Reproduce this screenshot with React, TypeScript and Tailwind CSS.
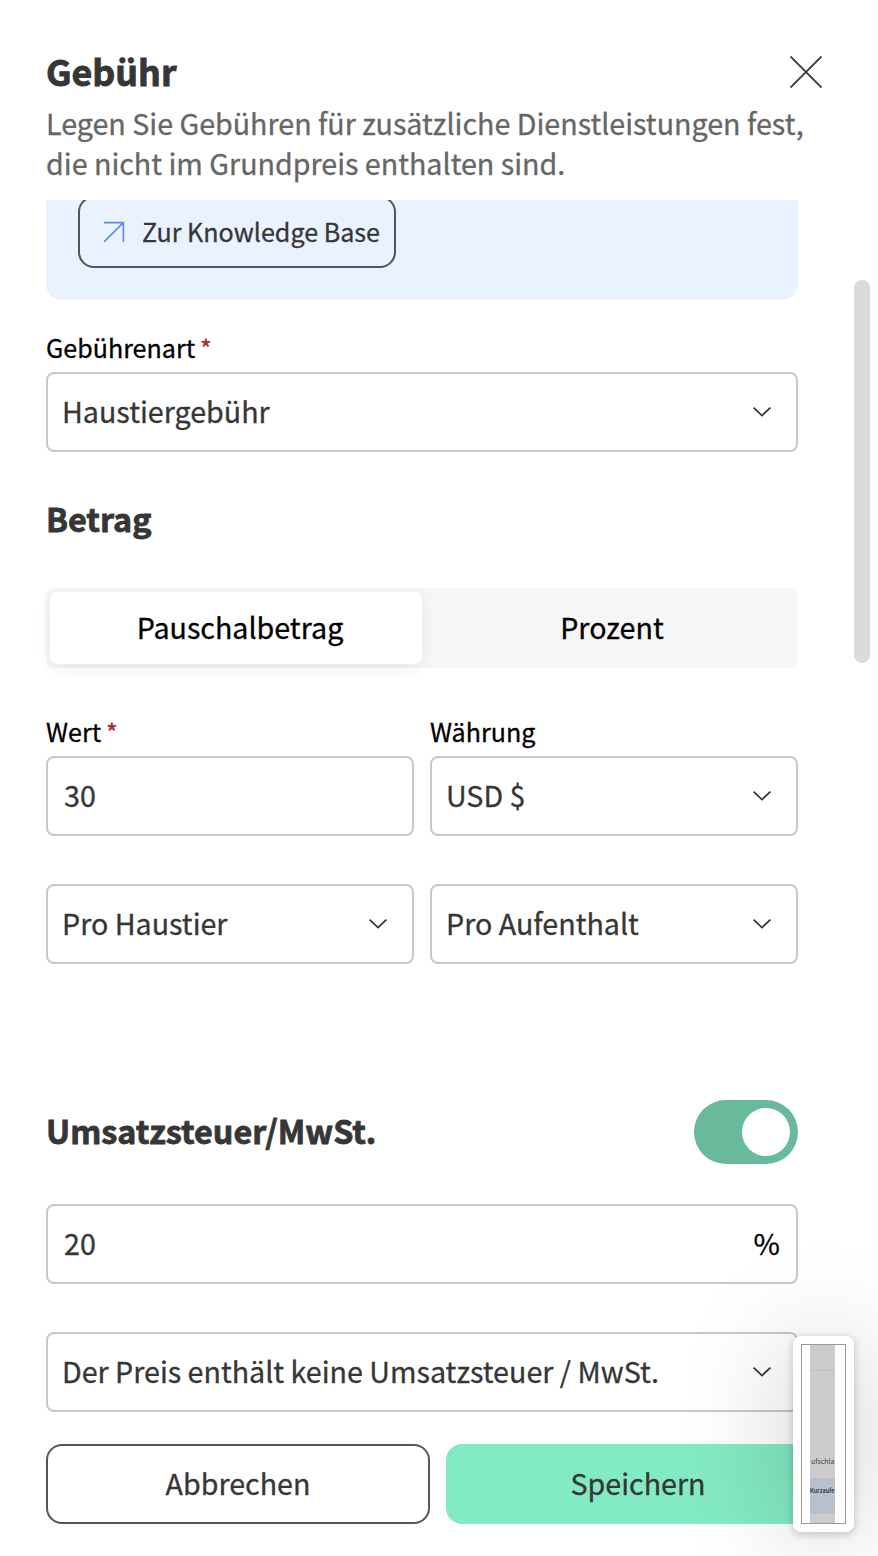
import React from "react";
import clsx from "clsx";

function ChevronDown() {
  return (
    <svg width="20" height="14" viewBox="0 0 20 14" fill="none" stroke="#363636" strokeWidth="1.8" className="shrink-0">
      <path d="M1.6 2.6l8.4 8 8.4-8" />
    </svg>
  );
}

function Label({ children, required }: { children: React.ReactNode; required?: boolean }) {
  return (
    <label className="flex h-10 items-center text-[25.1px] text-black">
      {children}
      {required && <span className="ml-[5px] -mt-1 text-[22px] font-bold text-[#a4343a] [-webkit-text-stroke:0]">*</span>}
    </label>
  );
}

function Select({ value, className }: { value: string; className?: string }) {
  return (
    <button
      type="button"
      className={clsx(
        "flex h-20 w-full items-center justify-between rounded-lg border-2 border-[#c8c8c8] bg-white pl-3.5 pr-6 text-[28.65px] whitespace-nowrap",
        className
      )}
    >
      <span className="pb-0.5">{value}</span>
      <ChevronDown />
    </button>
  );
}

function Field({ value, suffix }: { value: string; suffix?: string }) {
  return (
    <div className="flex h-20 w-full items-center rounded-lg border-2 border-[#c8c8c8] bg-white px-4 pb-0.5 text-[28.65px]">
      <input className="min-w-0 flex-1 outline-none" defaultValue={value} />
      {suffix && <span className="text-black">{suffix}</span>}
    </div>
  );
}

function Thumbnail() {
  return (
    <div className="absolute left-[793px] top-[1336px] h-[196px] w-[61px] rounded-lg bg-white p-2 shadow-[0_4px_110px_rgba(0,0,0,0.23),0_2px_8px_rgba(0,0,0,0.22)] [-webkit-text-stroke:0]">
      <div className="h-full border border-[#999] px-2">
        <div className="flex h-full w-[25px] flex-col overflow-hidden bg-[#cccccc] text-[7px] leading-[10px] whitespace-nowrap">
          <div className="h-[26px] shrink-0 border-b border-[#c0c0c0]" />
          <div className="mt-[85px] h-[22px] shrink-0 pl-px text-[#444]">ufschla</div>
          <div className="h-9 shrink-0 bg-[#b9c0cd] pt-2 text-[5.8px] font-medium text-[#222]">Kurzaufe</div>
        </div>
      </div>
    </div>
  );
}

export default function App() {
  return (
    <div className="relative flex h-[1556px] w-[878px] flex-col overflow-hidden bg-white font-['Noto_Sans_CJK_SC',sans-serif] text-[#363636] [-webkit-text-stroke:0.3px]">
      <header className="h-[200px] shrink-0 pl-[46px] pr-14 pt-12">
        <div className="flex h-12 items-center justify-between">
          <h1 className="pb-0.5 text-[35.7px] font-bold [-webkit-text-stroke:0.9px]">Gebühr</h1>
          <button type="button" aria-label="Schließen">
            <svg width="32" height="32" viewBox="0 0 32 32" fill="none" stroke="#363636" strokeWidth="1.8">
              <path d="M0.5 0.5l31 31M31.5 0.5l-31 31" />
            </svg>
          </button>
        </div>
        <p className="mt-[7px] text-[28.65px] leading-10 whitespace-nowrap text-[#666]">
          Legen Sie Gebühren für zusätzliche Dienstleistungen fest,
          <br />
          die nicht im Grundpreis enthalten sind.
        </p>
      </header>

      <div className="flex justify-between pl-[46px] pr-2">
        <main className="w-[752px]">
          <div className="flex h-[100px] items-end overflow-hidden rounded-b-2xl bg-[#eaf2ff] pb-8 pl-8">
            <button
              type="button"
              className="flex h-[72px] w-[318px] shrink-0 items-center rounded-2xl border-2 border-[#555] pl-6 text-[25.1px] whitespace-nowrap"
            >
              <svg width="22" height="22" viewBox="0 0 22 22" fill="none" stroke="#5c87f2" strokeWidth="1.6" className="mr-4">
                <path d="M0 1.6h19.4v19.4M19.4 1.6l-19.2 19.2" />
              </svg>
              Zur Knowledge Base
            </button>
          </div>

          <div className="mt-7">
            <Label required>Gebührenart</Label>
            <Select value="Haustiergebühr" className="mt-1" />
          </div>

          <h2 className="mt-11 flex h-12 items-center pb-1 text-[32.3px] font-bold [-webkit-text-stroke:0.8px]">Betrag</h2>

          <div className="mt-11 flex h-20 rounded-lg bg-[#f6f6f6] p-1 text-[28.65px] text-black">
            <button type="button" className="w-[372px] rounded-lg bg-white pb-0.5 pl-2 shadow-[0_4px_16px_rgba(0,0,0,0.07)]">
              Pauschalbetrag
            </button>
            <button type="button" className="flex-1 pb-0.5 pl-2">
              Prozent
            </button>
          </div>

          <div className="mt-11 grid grid-cols-2 gap-x-4">
            <div>
              <Label required>Wert</Label>
              <div className="mt-1">
                <Field value="30" />
              </div>
            </div>
            <div>
              <Label>Währung</Label>
              <Select value="USD $" className="mt-1" />
            </div>
            <Select value="Pro Haustier" className="mt-12" />
            <Select value="Pro Aufenthalt" className="mt-12" />
          </div>

          <div className="mt-[136px] flex h-16 items-center justify-between">
            <h2 className="pb-1 text-[32.3px] font-bold [-webkit-text-stroke:0.8px]">Umsatzsteuer/MwSt.</h2>
            <button type="button" role="switch" aria-checked="true" className="flex h-16 w-[104px] items-center justify-end rounded-full bg-[#69ba9b] p-2">
              <span className="size-12 rounded-full bg-white" />
            </button>
          </div>

          <div className="mt-10">
            <Field value="20" suffix="%" />
          </div>
          <Select value="Der Preis enthält keine Umsatzsteuer / MwSt." className="mt-12" />
        </main>
        <div className="mt-20 h-[383px] w-4 rounded-full bg-[#dbdbdb]" />
      </div>

      <footer className="mt-8 flex w-[844px] gap-4 pl-[46px] text-[28.65px]">
        <button type="button" className="h-20 w-96 rounded-2xl border-2 border-[#555] bg-white pb-0.5">
          Abbrechen
        </button>
        <button type="button" className="h-20 w-96 rounded-2xl bg-[#83ebc3] pb-0.5">
          Speichern
        </button>
      </footer>

      <Thumbnail />
    </div>
  );
}
